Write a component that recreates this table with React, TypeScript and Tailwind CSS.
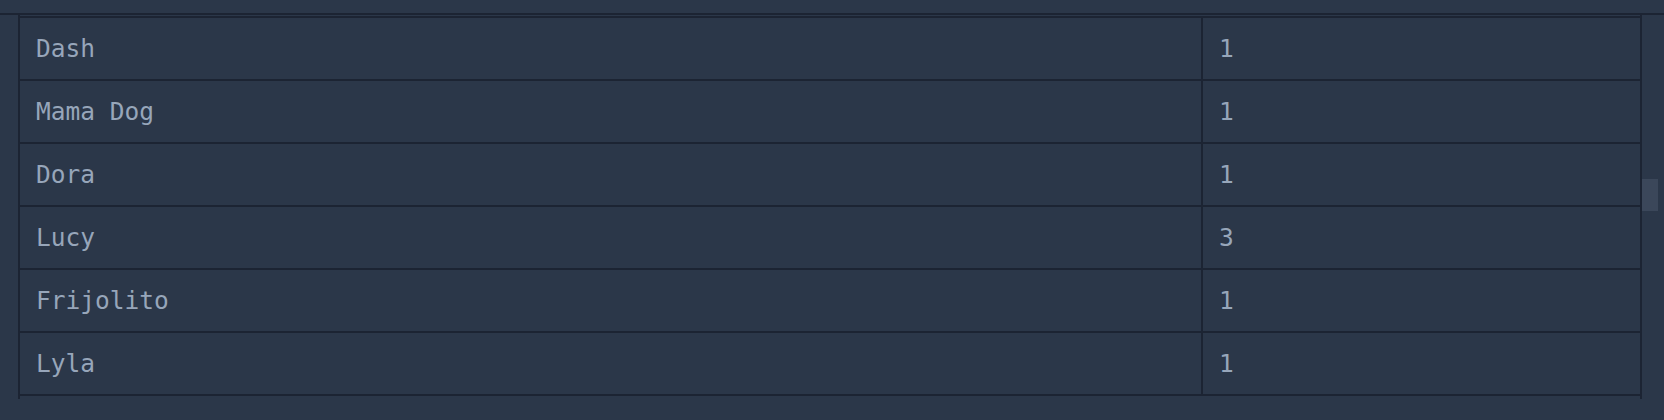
const rows = [
	{ name: "Dash", count: 1 },
	{ name: "Mama Dog", count: 1 },
	{ name: "Dora", count: 1 },
	{ name: "Lucy", count: 3 },
	{ name: "Frijolito", count: 1 },
	{ name: "Lyla", count: 1 },
];

export default function App() {
	return (
		<div
			className="h-[420px] w-full overflow-hidden bg-[#2b3749] text-[#97a6ba]"
			style={{ fontFamily: '"DejaVu Sans Mono", "Liberation Mono", monospace' }}
		>
			<div className="h-[13px]" />
			<div className="flex border-t-2 border-[#1c2433]">
				{/* Table area */}
				<div className="flex-1 pl-[18px]">
					<div className="h-[384px] border-x-2 border-[#1c2433] pt-px">
						<div className="border-t-2 border-[#1c2433]">
							{rows.map((row) => (
								<div
									key={row.name}
									className="grid h-[63px] grid-cols-[1183px_1fr] border-b-2 border-[#1c2433]"
								>
									<div className="flex items-center border-r-2 border-[#1c2433] px-4 pt-[2px] text-[24.5px]">
										{row.name}
									</div>
									<div className="flex items-center px-4 pt-[2px] text-[24.5px]">
										{row.count}
									</div>
								</div>
							))}
						</div>
					</div>
				</div>
				{/* Scrollbar */}
				<div className="w-[22px] pt-[164px]">
					<div className="h-[32px] w-[16px] bg-[#3b475a]" />
				</div>
			</div>
		</div>
	);
}
